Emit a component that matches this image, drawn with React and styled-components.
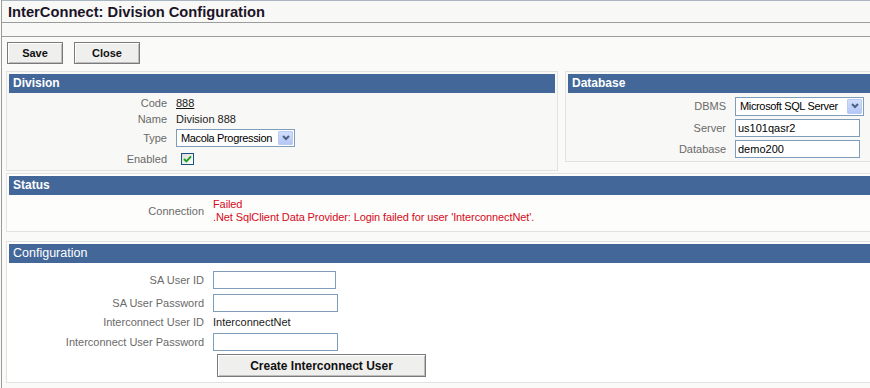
import styled, { createGlobalStyle } from "styled-components";

const GlobalStyle = createGlobalStyle`
    body {
        margin: 0;
        background: #fafaf8;
        overflow: hidden;
        font-family: "Liberation Sans", Arial, sans-serif;
        font-size: 11px;
        color: #222;
    }
`

function Check(){
    return(
        <svg width="9" height="8" viewBox="0 0 9 8">
            <path d="M1 4 L3.4 6.4 L8 1.4" fill="none" stroke="#21a121" strokeWidth="2"/>
        </svg>
    )
}

function Chevron(){
    return(
        <svg width="8" height="6" viewBox="0 0 8 6">
            <path d="M1 1 L4 4 L7 1" fill="none" stroke="#4d6185" strokeWidth="2"/>
        </svg>
    )
}

function Select({width, height, children}){
    return(
        <SelectBox width={width} height={height}>
            <SelectText>{children}</SelectText>
            <ArrowBox><Chevron/></ArrowBox>
        </SelectBox>
    )
}

export default function App(){
    return(
        <Page>
            <GlobalStyle/>
            <TitleBar>{"InterConnect: Division Configuration"}</TitleBar>
            <Band/>
            <Toolbar>
                <Button width={56}>{"Save"}</Button>
                <Button width={66}>{"Close"}</Button>
            </Toolbar>

            <Content>
                <TopRow>
                    <Panel width={552}>
                        <Header>{"Division"}</Header>
                        <Body>
                            <Row height={16}>
                                <Label width={158}>{"Code"}</Label>
                                <Link>{"888"}</Link>
                            </Row>
                            <Row height={16}>
                                <Label width={158}>{"Name"}</Label>
                                <Value>{"Division 888"}</Value>
                            </Row>
                            <Row height={22}>
                                <Label width={158}>{"Type"}</Label>
                                <Select width={119} height={18}>{"Macola Progression"}</Select>
                            </Row>
                            <Row height={19}>
                                <Label width={158}>{"Enabled"}</Label>
                                <CheckBox><Check/></CheckBox>
                            </Row>
                        </Body>
                    </Panel>

                    <Panel width={330}>
                        <Header>{"Database"}</Header>
                        <Body>
                            <Row height={22}>
                                <Label width={158}>{"DBMS"}</Label>
                                <Select width={129} height={19}>{"Microsoft SQL Server"}</Select>
                            </Row>
                            <Row height={21}>
                                <Label width={158}>{"Server"}</Label>
                                <Input width={125} defaultValue="us101qasr2"/>
                            </Row>
                            <Row height={21}>
                                <Label width={158}>{"Database"}</Label>
                                <Input width={125} defaultValue="demo200"/>
                            </Row>
                        </Body>
                    </Panel>
                </TopRow>

                <Panel width={886} top={2} bg="#fdfdfc">
                    <Header>{"Status"}</Header>
                    <Body top={3} bottom={5}>
                        <Row>
                            <Label width={195}>{"Connection"}</Label>
                            <ErrorText>
                                <div>{"Failed"}</div>
                                <div>{".Net SqlClient Data Provider: Login failed for user 'InterconnectNet'."}</div>
                            </ErrorText>
                        </Row>
                    </Body>
                </Panel>

                <Panel width={886} top={9} bg="#ffffff">
                    <Header light>{"Configuration"}</Header>
                    <Body top={5} bottom={2}>
                        <Row height={23}>
                            <Label width={195}>{"SA User ID"}</Label>
                            <Input width={123}/>
                        </Row>
                        <Row height={23}>
                            <Label width={195}>{"SA User Password"}</Label>
                            <Input width={125} type="password"/>
                        </Row>
                        <Row height={16}>
                            <Label width={195}>{"Interconnect User ID"}</Label>
                            <Value>{"InterconnectNet"}</Value>
                        </Row>
                        <Row height={23}>
                            <Label width={195}>{"Interconnect User Password"}</Label>
                            <Input width={125} type="password"/>
                        </Row>
                        <Row height={25}>
                            <Label width={195}/>
                            <WideButton>{"Create Interconnect User"}</WideButton>
                        </Row>
                    </Body>
                </Panel>
            </Content>
        </Page>
    )
}

const Page = styled.div`
    width: 900px;
    min-height: 388px;
    margin-left: 1px;
    border-left: 1px solid #9a9a9a;
`
const TitleBar = styled.div`
    height: 21px;
    display: flex;
    align-items: center;
    padding-left: 6px;
    border-top: 1px solid #a9b6c2;
    border-bottom: 1px solid #9c9c9c;
    background: #f8f8f6;
    color: #1c1428;
    font-size: 14.7px;
    font-weight: bold;
`
const Band = styled.div`
    height: 13px;
    border-bottom: 1px solid #9c9c9c;
    background: #f8f8f6;
`
const Toolbar = styled.div`
    display: flex;
    column-gap: 11px;
    padding: 5px 0 0 5px;
`
const Button = styled.button`
    width: ${props => props.width}px;
    height: 22px;
    padding: 0;
    border: 1px solid #7a7a7a;
    box-shadow: inset 1px 1px #ffffff, inset -1px -1px #bdbdbd;
    background: #efefed;
    color: #111;
    font-family: "Liberation Sans", Arial, sans-serif;
    font-size: 11px;
    font-weight: bold;
`
const WideButton = styled(Button)`
    width: 209px;
    height: 23px;
    margin-left: 4px;
    font-size: 12px;
`
const Content = styled.div`
    padding: 7px 0 0 4px;
`
const TopRow = styled.div`
    display: flex;
    align-items: flex-start;
    column-gap: 7px;
`
const Panel = styled.div`
    box-sizing: border-box;
    width: ${props => props.width}px;
    margin-top: ${props => props.top || 0}px;
    padding: 2px;
    border: 1px solid #e2e2e0;
    background: ${props => props.bg || "#f8f8f6"};
`
const Header = styled.div`
    height: 19px;
    line-height: 19px;
    padding-left: 4px;
    background: #436799;
    color: #ffffff;
    font-size: ${props => props.light ? "12.5px" : "12px"};
    font-weight: ${props => props.light ? "normal" : "bold"};
`
const Body = styled.div`
    padding: ${props => props.top ?? 2}px 0 ${props => props.bottom || 0}px;
`
const Row = styled.div`
    display: flex;
    align-items: center;
    column-gap: 9px;
    height: ${props => props.height ? props.height + "px" : "auto"};
`
const Label = styled.div`
    width: ${props => props.width}px;
    flex-shrink: 0;
    text-align: right;
    color: #6a6a6a;
`
const Value = styled.div`
    color: #1a1a1a;
`
const Link = styled(Value)`
    text-decoration: underline;
`
const ErrorText = styled.div`
    color: #d60a1a;
    line-height: 13px;
    letter-spacing: -0.1px;
`
const Input = styled.input`
    box-sizing: border-box;
    width: ${props => props.width}px;
    height: 18px;
    padding: 0 2px;
    border: 1px solid #7f9db9;
    background: #ffffff;
    color: #000;
    font-family: "Liberation Sans", Arial, sans-serif;
    font-size: 11px;
    outline: none;
`
const SelectBox = styled.div`
    box-sizing: border-box;
    width: ${props => props.width}px;
    height: ${props => props.height}px;
    display: flex;
    align-items: stretch;
    padding: 1px;
    border: 1px solid #7f9db9;
    background: #ffffff;
`
const SelectText = styled.div`
    flex: 1;
    display: flex;
    align-items: center;
    padding-left: 3px;
    color: #000;
    letter-spacing: -0.35px;
    white-space: nowrap;
    overflow: hidden;
`
const ArrowBox = styled.div`
    box-sizing: border-box;
    width: 15px;
    display: flex;
    align-items: center;
    justify-content: center;
    border: 1px solid #b9cbf3;
    border-radius: 1px;
    background: linear-gradient(#d2defb, #b4c7f5);
`
const CheckBox = styled.div`
    box-sizing: border-box;
    width: 13px;
    height: 12px;
    margin-left: 5px;
    display: flex;
    align-items: center;
    justify-content: center;
    border: 1px solid #1c5180;
    background: linear-gradient(135deg, #dcdcd7, #ffffff);
`
